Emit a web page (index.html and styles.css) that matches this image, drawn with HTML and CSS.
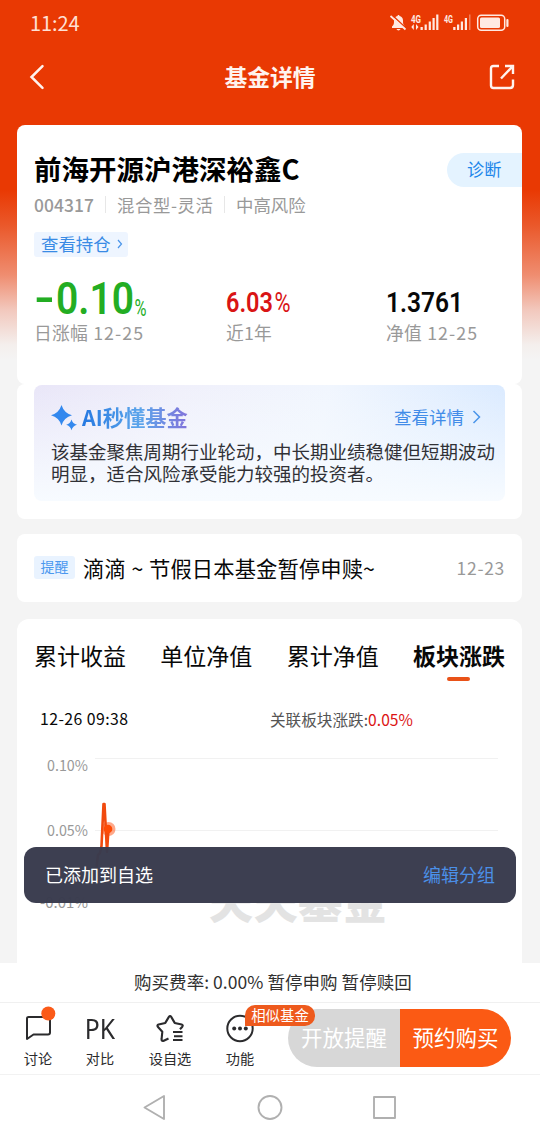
FILE: index.html
```html
<!DOCTYPE html>
<html lang="zh-CN">
<head>
<meta charset="utf-8">
<title>基金详情</title>
<link rel="stylesheet" href="styles.css">
</head>
<body>
<div class="screen">
  <header class="top">
    <div class="status">
      <span class="clock">11:24</span>
      <svg class="status-icons" width="122" height="22" viewBox="0 0 122 22" fill="#ffe9e2">
        <path d="M3 14.500c2-2 2-3 2-6 0-2.500 1.500-4 3.500-4.500 0-1.300 2-1.300 2 0C12.500 4.500 14 6 14 8.500c0 3 0 4 2 6v1.500H3zM7.500 17h4c-.5 1.900-3.500 1.900-4 0z"/>
        <path d="M3 3l15 14" stroke="#e93903" stroke-width="1.500"/>
        <path d="M1.500 4l15 13.500" stroke="#ffe9e2" stroke-width="1.700"/>
        <text class="net" x="22" y="10.500" textLength="10" lengthAdjust="spacingAndGlyphs">4G</text>
        <path d="M22.300 15l2.500-3v6zM29.500 15l-2.500-3v6zM31.500 15h2.300v3h-2.300zM35.600 12.500h2.200V18h-2.200zM39.700 9.500h2.200V18h-2.200zM43.500 6h2.200v12h-2.200zM47.200 2.500h2.200V18h-2.200z"/>
        <text class="net" x="55" y="10.500" textLength="9" lengthAdjust="spacingAndGlyphs">4G</text>
        <path d="M64.200 15h2.300v3h-2.300zM68 12.500h2.200V18H68zM71.800 9.500H74V18h-2.200zM75.800 6H78v12h-2.200z"/>
        <path d="M80 2.500h1.500V18H80z" opacity=".4"/>
        <rect x="88.700" y="3.200" width="27" height="15" rx="3.500" fill="none" stroke="#ffe9e2" stroke-width="1.500"/>
        <rect x="91" y="5.500" width="20" height="10.500" rx="1.500"/>
        <rect x="117.300" y="7" width="2.200" height="8" rx="1"/>
      </svg>
    </div>
    <div class="nav">
      <svg width="16" height="26" viewBox="0 0 16 26" fill="none" stroke="#fff3ee" stroke-width="2.500" stroke-linecap="round"><path d="M13.500 2.200L2.500 13l11 10.800"/></svg>
      <h1>基金详情</h1>
      <svg width="26" height="26" viewBox="0 0 26 26" fill="none" stroke="#fff3ee" stroke-width="2.400"><path d="M10 2H4.500Q2 2 2 4.500v17Q2 24 4.500 24h16.500q3 0 3-3v-5.500M12 14.500L23.500 2.500M16 2h8v8"/></svg>
    </div>
  </header>

  <main>
    <section class="card summary">
      <div class="title-row"><h2>前海开源沪港深裕鑫C</h2><span class="diagnose">诊断</span></div>
      <div class="meta"><span class="code">004317</span><i></i><span class="kind">混合型-灵活</span><i></i><span>中高风险</span></div>
      <div class="holdings"><span>查看持仓</span><svg width="6" height="10" viewBox="0 0 6 10" fill="none" stroke="#4a95ea" stroke-width="1.200"><path d="M1 1l3.500 4L1 9"/></svg></div>
      <div class="figures">
        <div class="figure"><svg width="116" height="46"><g class="din green"><text class="big" x="0" y="37" textLength="21" lengthAdjust="spacingAndGlyphs">-</text><text class="big" x="22" y="38" textLength="78" lengthAdjust="spacingAndGlyphs">0.10</text><text class="pct" x="100.500" y="39.500" textLength="12" lengthAdjust="spacingAndGlyphs">%</text></g></svg><p>日涨幅 <span>12-25</span></p></div>
        <div class="figure"><svg width="90" height="46"><g class="din red"><text class="mid" x="0" y="36" textLength="47" lengthAdjust="spacingAndGlyphs">6.03</text><text class="mid thin" x="48.500" y="36" textLength="16" lengthAdjust="spacingAndGlyphs">%</text></g></svg><p>近1年</p></div>
        <div class="figure"><svg width="90" height="46"><g class="din"><text class="mid" x="0" y="36" textLength="77" lengthAdjust="spacingAndGlyphs">1.3761</text></g></svg><p>净值 <span>12-25</span></p></div>
      </div>
    </section>

    <section class="card ai-card">
      <div class="ai">
        <div class="ai-head">
          <svg width="27" height="27" viewBox="0 0 27 27" fill="#3388ee"><path d="M10.500 1Q13 9 21 11.300 13 13.500 10.500 21.500 8 13.500 0 11.300 8 9 10.500 1z"/><path d="M20.500 15.500q1.200 4.300 5.500 5.300-4.300 1.200-5.500 5.400-1.200-4.200-5.300-5.400 4.100-1 5.300-5.300z"/></svg>
          <strong>AI秒懂基金</strong>
          <span>查看详情</span>
          <svg width="10" height="14" viewBox="0 0 10 14" fill="none" stroke="#4a95ea" stroke-width="1.500"><path d="M1.500 1l6 6-6 6"/></svg>
        </div>
        <p>该基金聚焦周期行业轮动，中长期业绩稳健但短期波动<br>明显，适合风险承受能力较强的投资者。</p>
      </div>
    </section>

    <section class="card notice"><span class="tag">提醒</span><span class="notice-text">滴滴 ~ 节假日本基金暂停申赎~</span><time>12-23</time></section>

    <section class="card chart-card">
      <nav class="tabs"><span>累计收益</span><span>单位净值</span><span>累计净值</span><span class="active">板块涨跌</span></nav>
      <div class="legend"><span>12-26 09:38</span><span class="rel">关联板块涨跌:<b>0.05%</b></span></div>
      <svg class="chart" width="505" height="220" viewBox="17 743 505 220">
        <path d="M95 758.500H498M95 830.500H498M95 902.500H498" stroke="#f1f1f1"/>
        <g class="axis"><text x="47" y="771" textLength="41" lengthAdjust="spacingAndGlyphs">0.10%</text><text x="47" y="836" textLength="41" lengthAdjust="spacingAndGlyphs">0.05%</text><text x="40" y="908" textLength="48" lengthAdjust="spacingAndGlyphs">-0.01%</text></g>
        <text class="mark" x="209" y="919" textLength="178">天天基金</text>
        <circle cx="108.500" cy="829" r="7" fill="#ff5214" opacity=".5"/>
        <path d="M96.500 867l1.500-12 2-2 1.500-7L103.500 804h1L107 852l1.500-23" fill="none" stroke="#f14a0e" stroke-width="2.600" stroke-linejoin="round"/>
        <circle cx="108" cy="829" r="4.300" fill="#ff4b05"/>
      </svg>
    </section>
  </main>

  <div class="toast"><span>已添加到自选</span><a>编辑分组</a></div>

  <footer>
    <div class="fee">购买费率: 0.00% 暂停申购 暂停赎回</div>
    <div class="actions">
      <div class="tool"><svg width="34" height="34" viewBox="0 0 34 34" fill="none" stroke="#2b2b2d" stroke-width="2"><path d="M6 30V9.500Q6 8 7.500 8H27q2 0 2 2v13.500q0 2-2 2H12.500L6 30z" stroke-linejoin="round"/><circle cx="27.300" cy="4.500" r="7" fill="#fb5a18" stroke="none"/></svg><span>讨论</span></div>
      <div class="tool narrow"><b>PK</b><span>对比</span></div>
      <div class="tool wide"><svg width="34" height="34" viewBox="0 0 34 34" fill="none" stroke="#2b2b2d" stroke-width="2.100" stroke-linejoin="round"><path d="M15.500 29.500l-4.700 2.200q-2.500.8-2.200-1.700l.7-7.200-4.500-5q-1-1.800.8-2.300l6.700-1.600 3.600-6q1.200-1.700 2.300 0l3.500 6 7 1.600q1.700.6.600 2.200l-2.300 2.600"/><path d="M20 23h9.500M21 27.200h8.500M20 31h9.500"/></svg><span>设自选</span></div>
      <div class="tool narrow"><svg width="34" height="34" viewBox="0 0 34 34"><circle cx="17" cy="19.500" r="12.700" fill="none" stroke="#2b2b2d" stroke-width="2"/><g fill="#2b2b2d"><circle cx="11.200" cy="19.500" r="2"/><circle cx="17" cy="19.500" r="2"/><circle cx="22.800" cy="19.500" r="2"/></g></svg><span>功能</span><em>相似基金</em></div>
      <div class="buy"><span class="remind">开放提醒</span><span class="book">预约购买</span></div>
    </div>
    <div class="system">
      <svg width="540" height="65" viewBox="0 1075 540 65" fill="none" stroke="#b0b0b0" stroke-width="1.900" stroke-linejoin="round"><path d="M164 1096v23L144.500 1107.500z"/><circle cx="270" cy="1107.500" r="11.500"/><rect x="374" y="1097" width="21" height="21"/></svg>
    </div>
  </footer>
</div>
</body>
</html>
```
FILE: styles.css
```css
* { box-sizing: border-box; margin: 0; padding: 0; }
body { background: #f4f4f4; font-family: "Noto Sans CJK SC", sans-serif; color: #080808; }
svg { display: block; flex: none; }
.screen { position: relative; display: flex; flex-direction: column; width: 540px; height: 1140px; overflow: hidden; white-space: nowrap; background: linear-gradient(#e93903 0, #e93903 190px, #ea582a 225px, #ef8d70 275px, #f2c8bd 310px, #f4efed 345px, #f4f4f4 360px); }
.top { flex: none; height: 125px; }
.status { display: flex; justify-content: space-between; align-items: center; height: 46px; padding: 0 29px 0 30px; }
.clock { color: #ffe0d5; font-size: 20px; letter-spacing: -.1px; line-height: 44px; }
.net { font: bold 10.500px Roboto, sans-serif; }
.nav { display: flex; justify-content: space-between; align-items: center; height: 62px; padding: 0 25px 0 29px; }
.nav h1 { font-size: 22.800px; font-weight: 700; color: #fff3ee; line-height: 60px; margin-left: 6px; }

main { flex: none; height: 838px; width: 505px; margin-left: 17px; overflow: hidden; }
.card { background: #fff; border-radius: 8px; }
.summary { height: 259px; padding: 28px 0 0 17px; }
.title-row { display: flex; justify-content: space-between; height: 34px; }
.title-row h2 { font-size: 27.500px; font-weight: 700; line-height: 31px; color: #000; }
.diagnose { width: 75px; height: 34px; padding-left: 20px; border-radius: 17px 0 0 17px; background: #e4f3ff; color: #1c86ea; font-size: 17.200px; line-height: 32px; }
.meta { display: flex; align-items: center; height: 33px; margin-top: 1px; color: #999; font-size: 17.400px; line-height: 33px; }
.code { width: 60px; font-weight: 500; letter-spacing: .1px; }
.kind { width: 96px; letter-spacing: .6px; }
.meta i { width: 1px; height: 17px; margin: 0 11px; background: #e7e7e7; }
.holdings { display: flex; align-items: center; gap: 6px; width: 94px; height: 25px; margin-top: 11px; padding-left: 7px; border-radius: 3px; background: #eef5ff; color: #398be5; font-size: 17.400px; line-height: 24px; }
.holdings span { margin-top: -2px; }
.holdings svg { margin-top: -2px; }
.figures { display: grid; grid-template-columns: 192px 160px 1fr; margin-top: 19px; }
.figure p { font-size: 17.800px; letter-spacing: .2px; line-height: 24px; color: #999; margin-top: -2px; }
.figure p span { margin-left: 1px; letter-spacing: 1.100px; }
.din { font-family: Roboto, sans-serif; font-weight: 600; fill: #080808; }
.din.green { fill: #23ad23; }
.din.red { fill: #d91414; }
.big { font-size: 45px; }
.pct { font-size: 23px; font-weight: 400; }
.mid { font-size: 28px; font-weight: 600; }
.thin { font-weight: 400; }

.ai-card { height: 135px; padding: 1px 17px 0; }
.ai { height: 116px; padding: 18px 9px 0 17px; border-radius: 8px; background: linear-gradient(to bottom, rgba(248, 251, 255, 0) 0, #f7fbff 100%), linear-gradient(100deg, #e9e6f8 0, #f0f0fb 30%, #f1f6fe 60%, #d8e9ff 100%); }
.ai-head { display: flex; align-items: center; height: 27px; }
.ai-head svg:first-child { margin-top: 2px; }
.ai-head strong { margin-left: 4px; font-size: 21.300px; line-height: 26px; background: linear-gradient(90deg, #2679e1, #5ca5eb 55%, #8273da); background-clip: text; -webkit-background-clip: text; color: transparent; }
.ai-head span { margin-left: auto; color: #428ce8; font-size: 17.500px; line-height: 24px; }
.ai-head svg:last-child { margin: 0 14px 0 8px; }
.ai p { margin-top: 11px; font-size: 18.500px; line-height: 21.700px; color: #303136; }

.notice { display: flex; align-items: center; height: 68px; margin-top: 14.500px; padding: 0 17px; }
.tag { width: 41px; height: 23px; border-radius: 3px; background: #e9f3ff; color: #4b98ef; font-size: 14px; line-height: 21px; text-align: center; }
.notice-text { margin-left: 8px; font-size: 21.300px; line-height: 64px; letter-spacing: .1px; word-spacing: .8px; }
.notice time { margin-left: auto; color: #999; font-size: 17.500px; letter-spacing: .7px; }

.chart-card { height: 360px; margin-top: 17.500px; border-radius: 12px 12px 0 0; }
.tabs { display: flex; justify-content: space-between; height: 79px; padding: 21px 17px 0; font-size: 23px; line-height: 31px; }
.tabs .active { display: flex; flex-direction: column; align-items: center; font-weight: 700; }
.tabs .active::after { content: ""; width: 23px; height: 4px; margin-top: 6px; border-radius: 2px; background: #e95218; }
.legend { display: flex; height: 45px; padding-left: 23px; font-size: 15.800px; line-height: 42px; }
.legend > span:first-child { width: 230px; letter-spacing: .45px; }
.rel { color: #555; font-size: 15.600px; letter-spacing: .03px; }
.rel b { color: #dc1414; font-weight: 400; }
.axis { font-size: 15px; fill: #999; }
.mark { font-size: 44px; font-weight: 900; fill: #e3e3e3; }

.toast { position: absolute; left: 24px; top: 847px; width: 492px; height: 56px; display: flex; justify-content: space-between; padding: 0 21px; border-radius: 12px; background: rgba(57, 59, 78, .98); color: #fff; font-size: 18px; line-height: 54px; }
.toast a { color: #4b90e8; }

footer { flex: none; height: 177px; background: #fff; }
.fee { height: 40px; padding-left: 134px; border-bottom: 1px solid #f0f0f0; font-size: 17.500px; letter-spacing: .05px; line-height: 37px; color: #303030; }
.actions { display: flex; height: 72px; padding-left: 3px; border-bottom: 1px solid #f2f2f2; }
.tool { position: relative; display: flex; flex: none; flex-direction: column; align-items: center; width: 70px; padding-top: 6px; color: #2b2b2d; }
.tool.narrow { width: 54px; }
.tool.wide { width: 86px; }
.tool svg { overflow: visible; }
.tool svg, .tool b { height: 34px; }
.tool b { font: 400 27.500px/40px "Noto Sans", sans-serif; transform: scaleX(.9); }
.tool span { font-size: 14.200px; line-height: 20px; margin-top: 5px; }
.tool em { position: absolute; z-index: 2; left: 32px; top: 2px; width: 70px; height: 21px; border-radius: 10px 10px 10px 0; background: #ee5a1d; color: #fff; font-size: 14.400px; font-style: normal; line-height: 19px; text-align: center; }
.buy { display: flex; flex: none; width: 223px; height: 58px; margin: 6px 0 0 21px; border-radius: 29px; overflow: hidden; color: #fff; font-size: 21.500px; line-height: 56px; text-align: center; }
.remind { width: 112px; background: #d7d7d7; }
.book { width: 111px; background: #fb5a14; }
```
